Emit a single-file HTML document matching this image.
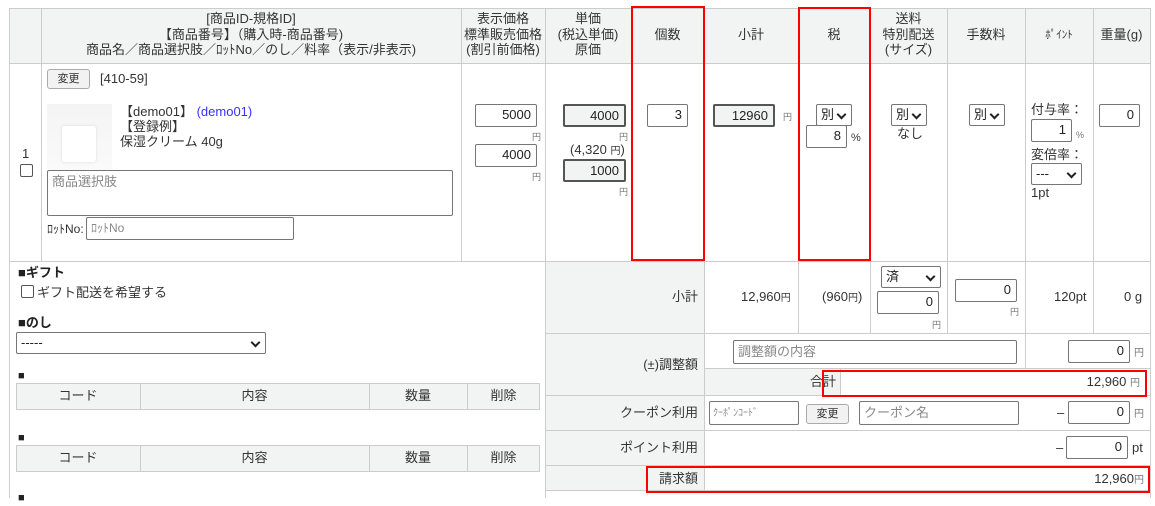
<!DOCTYPE html>
<html><head><meta charset="utf-8"><style>
*{box-sizing:border-box;margin:0;padding:0}
body{width:1155px;height:498px;overflow:hidden;background:#fff;font-family:"Liberation Sans","Noto Sans CJK JP",sans-serif;font-size:13px;line-height:16px;color:#333;position:relative}
.a{position:absolute}
.g{background:#f2f4f3}
.hl{position:absolute;background:#ccc;height:1px}
.vl{position:absolute;background:#ccc;width:1px}
.c{text-align:center}
.r{text-align:right}
.in{position:absolute;border:1px solid #767676;border-radius:2px;background:#fff;text-align:right;padding-right:5px;font-size:13px;line-height:20px;height:23px;color:#222}
.ro{background:#f2f4f3;border:2px solid #555}
.y{position:absolute;font-size:9px;color:#777}
.sel{position:absolute;border:1px solid #767676;border-radius:2px;background:#fff;font-size:13px;line-height:20px;height:22px;padding-left:4px;color:#222}
.sel:after{content:"";position:absolute;right:6px;top:6px;width:5px;height:5px;border-right:2px solid #222;border-bottom:2px solid #222;transform:rotate(45deg)}
.red{position:absolute;border:2px solid #f00}
.ph{color:#888}
.btn{position:absolute;border:1px solid #aaa;border-radius:3px;background:#f2f2f2;font-size:11px;text-align:center}
.cb{position:absolute;width:13px;height:13px;border:1px solid #555;border-radius:2px;background:#fff}
</style></head><body>
<div class="a g" style="left:9px;top:8px;width:1141px;height:55px"></div>
<div class="a g" style="left:546px;top:262px;width:158px;height:228px"></div>
<div class="a g" style="left:704px;top:368px;width:136px;height:27px"></div>
<div class="hl" style="left:9px;top:8px;width:1141px"></div>
<div class="hl" style="left:9px;top:63px;width:1141px"></div>
<div class="hl" style="left:9px;top:261px;width:1141px"></div>
<div class="hl" style="left:546px;top:333px;width:604px"></div>
<div class="hl" style="left:704px;top:368px;width:446px"></div>
<div class="hl" style="left:546px;top:395px;width:604px"></div>
<div class="hl" style="left:546px;top:430px;width:604px"></div>
<div class="hl" style="left:546px;top:465px;width:604px"></div>
<div class="hl" style="left:546px;top:490px;width:604px"></div>
<div class="vl" style="left:9px;top:8px;height:490px"></div>
<div class="vl" style="left:41px;top:8px;height:253px"></div>
<div class="vl" style="left:461px;top:8px;height:253px"></div>
<div class="vl" style="left:545px;top:8px;height:490px"></div>
<div class="vl" style="left:631px;top:8px;height:253px"></div>
<div class="vl" style="left:704px;top:8px;height:482px"></div>
<div class="vl" style="left:798px;top:8px;height:325px"></div>
<div class="vl" style="left:870px;top:8px;height:325px"></div>
<div class="vl" style="left:947px;top:8px;height:325px"></div>
<div class="vl" style="left:1025px;top:8px;height:360px"></div>
<div class="vl" style="left:1093px;top:8px;height:325px"></div>
<div class="vl" style="left:1150px;top:8px;height:490px"></div>
<div class="vl" style="left:840px;top:368px;height:27px"></div>
<div class="a c" style="left:41px;top:11px;width:420px;line-height:15.5px">[商品ID-規格ID]<br>【商品番号】（購入時-商品番号)<br>商品名／商品選択肢／ﾛｯﾄNo／のし／料率（表示/非表示)</div>
<div class="a c" style="left:461px;top:11px;width:84px;line-height:15.5px">表示価格<br>標準販売価格<br>(割引前価格)</div>
<div class="a c" style="left:545px;top:11px;width:86px;line-height:15.5px">単価<br>(税込単価)<br>原価</div>
<div class="a c" style="left:631px;top:27px;width:73px">個数</div>
<div class="a c" style="left:704px;top:27px;width:94px">小計</div>
<div class="a c" style="left:798px;top:27px;width:72px">税</div>
<div class="a c" style="left:870px;top:11px;width:77px;line-height:15.5px">送料<br>特別配送<br>(サイズ)</div>
<div class="a c" style="left:947px;top:27px;width:78px">手数料</div>
<div class="a c" style="left:1025px;top:27px;width:68px;font-size:11px">ﾎﾟｲﾝﾄ</div>
<div class="a c" style="left:1093px;top:27px;width:57px">重量(g)</div>
<div class="a" style="left:22px;top:146px">1</div>
<div class="cb" style="left:20px;top:164px"></div>
<div class="btn" style="left:47px;top:69px;width:43px;height:20px;line-height:18px">変更</div>
<div class="a" style="left:100px;top:71px">[410-59]</div>
<div class="a" style="left:47px;top:104px;width:65px;height:66px;background:linear-gradient(#f4f4f5,#fafafa)"></div>
<div class="a" style="left:62px;top:126px;width:34px;height:36px;background:#fff;border-radius:3px;box-shadow:0 0 3px #ddd"></div>
<div class="a" style="left:120px;top:104px;line-height:15px">【demo01】 <span style="color:#33f">(demo01)</span><br>【登録例】<br>保湿クリーム 40g</div>
<div class="a" style="left:47px;top:170px;width:406px;height:46px;border:1px solid #767676;border-radius:2px;padding:3px 4px" ><span class="ph">商品選択肢</span></div>
<div class="a" style="left:47px;top:221px;font-size:12px">ﾛｯﾄNo:</div>
<div class="a" style="left:86px;top:217px;width:208px;height:23px;border:1px solid #767676;border-radius:2px;padding:2px 4px;font-size:12px"><span class="ph">ﾛｯﾄNo</span></div>
<div class="in" style="left:475px;top:104px;width:62px">5000</div>
<div class="y" style="left:532px;top:129px">円</div>
<div class="in" style="left:475px;top:144px;width:62px">4000</div>
<div class="y" style="left:532px;top:169px">円</div>
<div class="in ro" style="left:563px;top:104px;width:63px">4000</div>
<div class="y" style="left:619px;top:129px">円</div>
<div class="a" style="left:570px;top:142px">(4,320 <span style="font-size:10px">円</span>)</div>
<div class="in ro" style="left:563px;top:159px;width:63px">1000</div>
<div class="y" style="left:619px;top:184px">円</div>
<div class="in" style="left:647px;top:104px;width:41px">3</div>
<div class="in ro" style="left:713px;top:104px;width:62px">12960</div>
<div class="y" style="left:783px;top:109px">円</div>
<div class="sel" style="left:816px;top:104px;width:36px">別</div>
<div class="in" style="left:806px;top:125px;width:41px">8</div>
<div class="a" style="left:851px;top:130px;font-size:11px">%</div>
<div class="sel" style="left:891px;top:104px;width:36px">別</div>
<div class="a" style="left:897px;top:126px">なし</div>
<div class="sel" style="left:969px;top:104px;width:36px">別</div>
<div class="a" style="left:1031px;top:102px;line-height:15px">付与率：</div>
<div class="in" style="left:1031px;top:119px;width:41px">1</div>
<div class="a" style="left:1076px;top:127px;font-size:9px;color:#777">%</div>
<div class="a" style="left:1031px;top:147px;line-height:15px">変倍率：</div>
<div class="sel" style="left:1031px;top:163px;width:51px">---</div>
<div class="a" style="left:1031px;top:185px">1pt</div>
<div class="in" style="left:1099px;top:104px;width:41px">0</div>
<div class="a" style="left:18px;top:265px;font-weight:bold;color:#222">■ギフト</div>
<div class="cb" style="left:21px;top:285px"></div>
<div class="a" style="left:37px;top:285px">ギフト配送を希望する</div>
<div class="a" style="left:18px;top:315px;font-weight:bold;color:#222">■のし</div>
<div class="sel" style="left:16px;top:332px;width:250px">-----</div>
<div class="a" style="left:18px;top:368px;font-weight:bold;color:#222;font-size:11px">■</div>
<div class="a" style="left:18px;top:430px;font-weight:bold;color:#222;font-size:11px">■</div>
<div class="a" style="left:18px;top:490px;font-weight:bold;color:#222;font-size:11px">■</div>
<div class="a g" style="left:16px;top:383px;width:524px;height:27px;border:1px solid #ccc"></div>
<div class="a g" style="left:16px;top:445px;width:524px;height:27px;border:1px solid #ccc"></div>
<div class="vl" style="left:140px;top:383px;height:27px"></div><div class="vl" style="left:369px;top:383px;height:27px"></div><div class="vl" style="left:467px;top:383px;height:27px"></div>
<div class="vl" style="left:140px;top:445px;height:27px"></div><div class="vl" style="left:369px;top:445px;height:27px"></div><div class="vl" style="left:467px;top:445px;height:27px"></div>
<div class="a c" style="left:16px;top:388px;width:124px">コード</div><div class="a c" style="left:140px;top:388px;width:229px">内容</div><div class="a c" style="left:369px;top:388px;width:98px">数量</div><div class="a c" style="left:467px;top:388px;width:73px">削除</div>
<div class="a c" style="left:16px;top:450px;width:124px">コード</div><div class="a c" style="left:140px;top:450px;width:229px">内容</div><div class="a c" style="left:369px;top:450px;width:98px">数量</div><div class="a c" style="left:467px;top:450px;width:73px">削除</div>
<div class="a r" style="left:546px;top:289px;width:152px">小計</div>
<div class="a" style="left:741px;top:289px">12,960<span style="font-size:10px">円</span></div>
<div class="a" style="left:822px;top:289px">(960<span style="font-size:10px">円</span>)</div>
<div class="sel" style="left:881px;top:266px;width:60px">済</div>
<div class="in" style="left:877px;top:291px;width:62px">0</div>
<div class="y" style="left:932px;top:317px">円</div>
<div class="in" style="left:955px;top:279px;width:62px">0</div>
<div class="y" style="left:1010px;top:304px">円</div>
<div class="a" style="left:1054px;top:289px">120pt</div>
<div class="a" style="left:1124px;top:289px">0 g</div>
<div class="a r" style="left:546px;top:357px;width:152px">(±)調整額</div>
<div class="a" style="left:733px;top:340px;width:284px;height:24px;border:1px solid #767676;border-radius:2px;padding:3px 4px"><span class="ph">調整額の内容</span></div>
<div class="in" style="left:1068px;top:340px;width:62px">0</div>
<div class="y" style="left:1134px;top:346px;font-size:10px">円</div>
<div class="a r" style="left:704px;top:374px;width:132px">合計</div>
<div class="a r" style="left:840px;top:374px;width:300px">12,960 <span style="font-size:10px;color:#777">円</span></div>
<div class="a r" style="left:546px;top:405px;width:152px">クーポン利用</div>
<div class="a" style="left:709px;top:401px;width:90px;height:24px;border:1px solid #767676;border-radius:2px;padding:4px 3px;font-size:10px"><span class="ph">ｸｰﾎﾟﾝｺｰﾄﾞ</span></div>
<div class="btn" style="left:806px;top:404px;width:43px;height:20px;line-height:18px">変更</div>
<div class="a" style="left:859px;top:401px;width:160px;height:24px;border:1px solid #767676;border-radius:2px;padding:3px 4px"><span class="ph">クーポン名</span></div>
<div class="a" style="left:1057px;top:405px">–</div>
<div class="in" style="left:1068px;top:401px;width:62px">0</div>
<div class="y" style="left:1134px;top:407px;font-size:10px">円</div>
<div class="a r" style="left:546px;top:440px;width:152px">ポイント利用</div>
<div class="a" style="left:1056px;top:440px">–</div>
<div class="in" style="left:1066px;top:436px;width:62px">0</div>
<div class="a" style="left:1132px;top:440px">pt</div>
<div class="a r" style="left:546px;top:471px;width:152px">請求額</div>
<div class="a r" style="left:704px;top:471px;width:440px">12,960<span style="font-size:10px;color:#777">円</span></div>
<div class="red" style="left:631px;top:6px;width:74px;height:255px"></div>
<div class="red" style="left:798px;top:7px;width:73px;height:254px"></div>
<div class="red" style="left:822px;top:370px;width:325px;height:27px"></div>
<div class="red" style="left:646px;top:466px;width:504px;height:27px"></div>
</body></html>
